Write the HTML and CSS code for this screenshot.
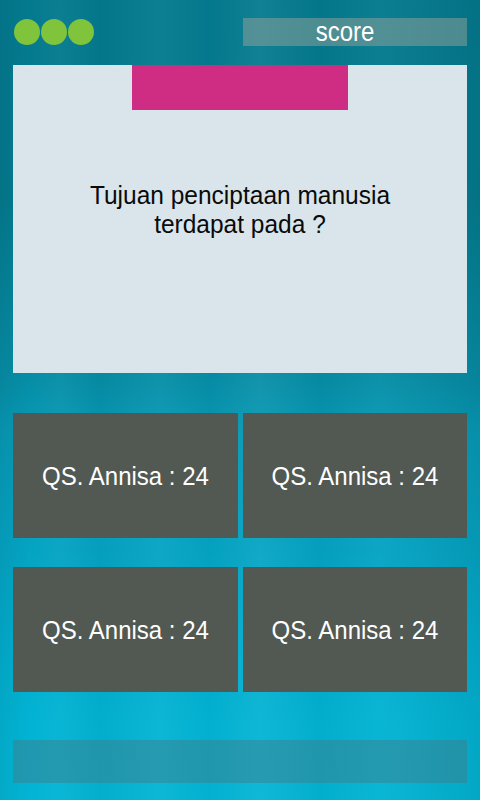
FILE: index.html
```html
<!DOCTYPE html>
<html lang="id">
<head>
<meta charset="utf-8">
<title>Kuis</title>
<link rel="stylesheet" href="styles.css">
</head>
<body>
<div class="screen">
  <header class="top">
    <div class="lives">
      <span class="life"></span>
      <span class="life"></span>
      <span class="life"></span>
    </div>
    <div class="score"><span class="score-text">score</span></div>
  </header>

  <section class="card">
    <div class="tag"></div>
    <p class="question">Tujuan penciptaan manusia<br>terdapat pada ?</p>
  </section>

  <section class="answers">
    <button class="answer"><span class="label">QS. Annisa : 24</span></button>
    <button class="answer"><span class="label">QS. Annisa : 24</span></button>
    <button class="answer"><span class="label">QS. Annisa : 24</span></button>
    <button class="answer"><span class="label">QS. Annisa : 24</span></button>
  </section>

  <footer class="bottom-bar"></footer>
</div>
</body>
</html>
```

FILE: styles.css
```css
* { box-sizing: border-box; }

html, body {
  margin: 0;
  padding: 0;
}

body {
  width: 480px;
  height: 800px;
  overflow: hidden;
  font-family: "Liberation Sans", Arial, sans-serif;
  background:
    linear-gradient(90deg,
      rgba(0,0,0,0.06) 0px, rgba(0,0,0,0) 30px,
      rgba(255,255,255,0.03) 60px, rgba(0,0,0,0.03) 100px,
      rgba(255,255,255,0.04) 160px, rgba(0,0,0,0.02) 210px,
      rgba(255,255,255,0.05) 260px, rgba(0,0,0,0.03) 320px,
      rgba(255,255,255,0.03) 380px, rgba(0,0,0,0.07) 480px),
    linear-gradient(180deg, #047a8f 0px, #047b8f 200px, #068ea7 380px, #0799b5 430px, #03aacb 620px, #02b3d3 720px, #03b4d4 800px);
}

.screen {
  display: flex;
  flex-direction: column;
  padding: 18px 13px 0 13px;
  height: 800px;
}

.top {
  display: flex;
  justify-content: space-between;
  align-items: center;
  height: 28px;
}

.lives {
  display: flex;
  gap: 1px;
  padding-left: 1px;
}

.life {
  width: 26px;
  height: 26px;
  border-radius: 50%;
  background: #80c43b;
}

.score {
  width: 224px;
  height: 28px;
  background: rgba(150, 162, 152, 0.5);
  display: flex;
  align-items: center;
  justify-content: center;
  padding-right: 20px;
}

.score-text {
  color: #ffffff;
  font-size: 24px;
  line-height: 28px;
  display: inline-block;
  transform: scaleY(1.12);
}

.card {
  margin-top: 19px;
  height: 308px;
  background: #d9e5eb;
  display: flex;
  flex-direction: column;
  align-items: center;
}

.tag {
  width: 216px;
  height: 45px;
  background: #cf2d83;
}

.question {
  margin: 72px 0 0 0;
  font-size: 24.5px;
  line-height: 27px;
  color: #0a0a0a;
  text-align: center;
  transform: scaleY(1.08);
}

.answers {
  margin-top: 40px;
  display: grid;
  grid-template-columns: 225px 224px;
  grid-template-rows: 125px 125px;
  column-gap: 5px;
  row-gap: 29px;
}

.answer {
  border: 0;
  margin: 0;
  padding: 0;
  background: #525852;
  color: #ffffff;
  font-family: "Liberation Sans", Arial, sans-serif;
  font-size: 24px;
  display: flex;
  align-items: center;
  justify-content: center;
}

.label {
  display: inline-block;
  transform: scaleY(1.1);
}

.bottom-bar {
  margin-top: 48px;
  height: 43px;
  background: rgba(62, 125, 140, 0.5);
}
```
